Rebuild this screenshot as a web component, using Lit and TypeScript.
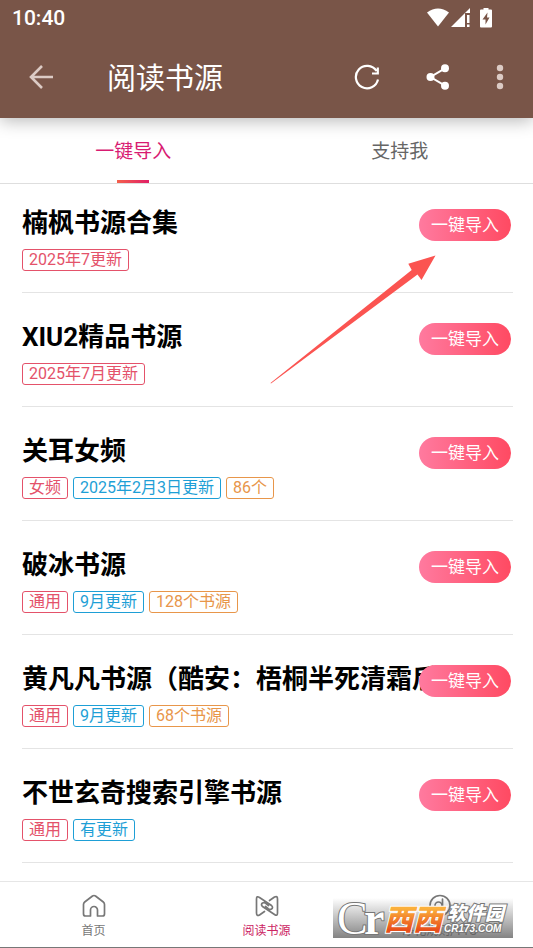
import { LitElement, html, css, svg } from "lit";
import { customElement, state } from "lit/decorators.js";
import { classMap } from "lit/directives/class-map.js";

interface Source {
  title: string;
  tags: string[];
}

const SOURCES: Source[] = [
  { title: "楠枫书源合集", tags: ["2025年7更新"] },
  { title: "XIU2精品书源", tags: ["2025年7月更新"] },
  { title: "关耳女频", tags: ["女频", "2025年2月3日更新", "86个"] },
  { title: "破冰书源", tags: ["通用", "9月更新", "128个书源"] },
  { title: "黄凡凡书源（酷安：梧桐半死清霜后）", tags: ["通用", "9月更新", "68个书源"] },
  { title: "不世玄奇搜索引擎书源", tags: ["通用", "有更新"] },
];

const TAG_COLOURS = ["red", "blue", "orange"];

@customElement("source-item")
class SourceItem extends LitElement {
  static properties = { source: { attribute: false } };
  declare source: Source;

  static styles = css`
    :host {
      display: block;
      border-bottom: 1px solid #e4e4e4;
      padding: 26px 0 21px;
    }
    .head {
      display: grid;
      grid-template-columns: minmax(0, 1fr);
      align-items: center;
      height: 32px;
    }
    .title {
      grid-area: 1 / 1;
      margin: 0;
      font-size: 26px;
      line-height: 32px;
      font-weight: 700;
      color: #000;
      white-space: nowrap;
      overflow: hidden;
    }
    .import {
      grid-area: 1 / 1;
      justify-self: end;
      margin: 4px 2px 0 0;
      height: 32px;
      padding: 0 12px 4px;
      border: 0;
      border-radius: 16px;
      background: linear-gradient(90deg, #ff7a9f, #ff4a62);
      color: #fff;
      font: inherit;
      font-size: 17px;
      cursor: pointer;
    }
    .tags {
      display: flex;
      gap: 5px;
      margin-top: 12px;
    }
    .tag {
      box-sizing: border-box;
      height: 22px;
      padding: 0 6px;
      border: 1px solid;
      border-radius: 3px;
      font-size: 16px;
      line-height: 19px;
      white-space: nowrap;
    }
    .red { color: #e4526a; }
    .blue { color: #1e9fd6; }
    .orange { color: #e8964a; }
  `;

  render() {
    return html`
      <div class="head">
        <h2 class="title">${this.source.title}</h2>
        <button class="import">一键导入</button>
      </div>
      <div class="tags">
        ${this.source.tags.map(
          (t, i) => html`<span class="tag ${TAG_COLOURS[i]}">${t}</span>`
        )}
      </div>
    `;
  }
}

@customElement("app-root")
class AppRoot extends LitElement {
  @state() declare tab: number;

  constructor() {
    super();
    this.tab = 0;
  }

  static styles = css`
    :host {
      display: flex;
      flex-direction: column;
      min-height: 100vh;
      background: #fff;
      font-family: Roboto, "Noto Sans CJK SC", sans-serif;
      color: #666;
    }
    button { font-family: inherit; cursor: pointer; }
    svg { display: block; }
    header {
      position: relative;
      z-index: 1;
      background: #795548;
      color: #fff;
      box-shadow: 0 3px 16px rgba(0, 0, 0, 0.28);
    }
    .status {
      display: flex;
      align-items: center;
      justify-content: space-between;
      height: 36px;
      padding: 0 40px 0 12px;
      font-size: 21px;
      font-weight: 500;
    }
    .bar {
      display: flex;
      align-items: center;
      height: 82px;
      padding: 0 13px 0 21px;
    }
    .bar button {
      display: grid;
      place-items: center;
      width: 40px;
      height: 40px;
      padding: 0;
      border: 0;
      background: none;
      color: inherit;
    }
    .bar .soft { color: #dccbc5; }
    .bar h1 {
      flex: 1;
      margin: 0 0 0 46px;
      padding-top: 4px;
      font-size: 29px;
      line-height: 40px;
      font-weight: 400;
    }
    .actions { display: flex; }
    .actions button:nth-child(2) { margin: 0 22px 0 31px; }
    .tabs {
      display: grid;
      grid-template-columns: 1fr 1fr;
      border-bottom: 1px solid #dedede;
      height: 65px;
    }
    .tab {
      display: flex;
      flex-direction: column;
      align-items: center;
      justify-content: space-between;
      padding: 20px 0 0;
      border: 0;
      background: none;
      font-size: 19px;
      line-height: 28px;
      color: #666;
    }
    .tab.on { color: #d81b72; }
    .tab.on::after {
      content: "";
      width: 32px;
      height: 3px;
      background: linear-gradient(90deg, #f4604c, #e01f66);
    }
    main {
      position: relative;
      flex: 1;
      padding: 0 20px 0 22px;
    }
    source-item:first-of-type { padding-top: 21px; }
    .pointer {
      position: absolute;
      top: 71px;
      right: 97px;
      pointer-events: none;
    }
    footer {
      position: relative;
      border-top: 1px solid #e6e6e6;
      border-bottom: 1px solid #777;
    }
    nav {
      display: grid;
      grid-template-columns: repeat(3, 1fr);
      height: 65px;
      padding: 0 7px;
    }
    nav a {
      display: flex;
      flex-direction: column;
      align-items: center;
      gap: 5px;
      padding-top: 12px;
      font-size: 12px;
      line-height: 16px;
      color: #777;
      text-decoration: none;
    }
    nav svg { color: #777; }
    nav a.on { color: #cc2463; }
    .mark {
      position: absolute;
      right: 20px;
      bottom: 9px;
      overflow: visible;
      pointer-events: none;
      background: linear-gradient(rgba(90, 90, 90, 0), rgba(90, 90, 90, 0.75));
    }
    .serif { font-family: "Liberation Serif", serif; }
    .bold { font-weight: 700; }
    .cjk { font-family: "Noto Sans CJK SC", sans-serif; font-weight: 900; }
    .sans { font-family: "Liberation Sans", sans-serif; font-weight: 700; font-style: italic; }
    .slant { font-style: italic; }
    .edge { stroke: #777; stroke-width: 2; paint-order: stroke; fill: #fff; }
    .warm { stroke: #fff; stroke-width: 2; paint-order: stroke; fill: url(#warm); }
  `;

  private navIcon(i: number) {
    const shapes = [
      svg`<path d="M1.5 10.5 Q1.5 9 2.7 8 L10.5 2 Q12 1 13.5 2 L21.3 8 Q22.5 9 22.5 10.5 V20 Q22.5 22 20.5 22 H15.500 V16 A3.500 3.500 0 0 0 8.500 16 V22 H3.500 Q1.500 22 1.500 20 Z"/>`,
      svg`<path d="M9.500 17.500 L4.500 21 Q1.500 22.500 1.500 19 V5 Q1.500 1.500 4.500 3.500 L16.500 11.500 Q18.500 13.500 16.500 15 Q14.500 16 13 14.500 L10.500 12.500 M14.500 6.500 L19.500 3 Q22.500 1.500 22.500 5 V19 Q22.500 22.500 19.500 20.500 L7.500 12.500 Q5.500 10.500 7.500 9 Q9.500 8 11 9.500 L13.500 11.500"/>`,
      svg`<circle cx="12" cy="11.500" r="10"/><circle cx="10.500" cy="11.500" r="3.500"/><path d="M14.500 5 V15.500"/>`,
    ];
    return html`<svg width="24" height="24" viewBox="0 0 24 24" fill="none" stroke="currentColor" stroke-width="1.700" stroke-linejoin="round" stroke-linecap="round" aria-hidden="true">${shapes[i]}</svg>`;
  }

  render() {
    return html`
      <header>
        <div class="status">
          <span>10:40</span>
          <svg width="66" height="20" viewBox="0 0 66 20" fill="#fff" aria-hidden="true">
            <path d="M0 4.500 Q11 -3.500 22 4.500 L11 18.500 Z" />
            <path d="M24 19 L43 0 V5 H38 V19 Z M40 7 H42.500 V15 H40 Z M40 16.500 H42.500 V19 H40 Z" />
            <path fill-rule="evenodd" d="M56.500 0 H61.500 V1.500 H64 Q65 1.500 65 2.500 V18.500 Q65 19.500 64 19.500 H54 Q53 19.500 53 18.500 V2.500 Q53 1.500 54 1.500 H56.500 Z M60.500 4.500 L55.500 11.500 H58.500 V16.500 L62.500 9.500 H60 Z" />
          </svg>
        </div>
        <div class="bar">
          <button class="soft" aria-label="返回">
            <svg width="24" height="24" viewBox="0 0 24 24" fill="none" stroke="currentColor" stroke-width="2.600">
              <path d="M24 12 H2 M13 1 L2 12 L13 23" />
            </svg>
          </button>
          <h1>阅读书源</h1>
          <div class="actions">
            <button aria-label="刷新">
              <svg width="26" height="26" viewBox="0 0 26 26" fill="none" stroke="currentColor" stroke-width="2.200">
                <path d="M22.500 7 A11.200 11.200 0 1 0 24 15.500 M23.800 3.500 V9.500 H18" />
              </svg>
            </button>
            <button aria-label="分享">
              <svg width="24" height="26" viewBox="0 0 24 26" fill="currentColor">
                <path d="M19 4.300 L4.500 13 L19 21.700" fill="none" stroke="currentColor" stroke-width="2" />
                <circle cx="19" cy="4.300" r="4" /><circle cx="4.500" cy="13" r="4" /><circle cx="19" cy="21.700" r="4" />
              </svg>
            </button>
            <button class="soft" aria-label="更多">
              <svg width="8" height="26" viewBox="0 0 8 26" fill="currentColor">
                <circle cx="4" cy="4" r="3.200" /><circle cx="4" cy="13" r="3.200" /><circle cx="4" cy="22" r="3.200" />
              </svg>
            </button>
          </div>
        </div>
      </header>
      <div class="tabs" role="tablist">
        ${["一键导入", "支持我"].map(
          (t, i) => html`<button
            role="tab"
            aria-selected=${this.tab === i}
            class=${classMap({ tab: true, on: this.tab === i })}
            @click=${() => (this.tab = i)}
          >${t}</button>`
        )}
      </div>
      <main>
        ${SOURCES.map((s) => html`<source-item .source=${s}></source-item>`)}
        <svg class="pointer" width="166" height="129" viewBox="0 0 166 129" aria-hidden="true">
          <path fill="#fb5451" d="M0.500 128 L141.700 15 L138.300 8.700 L165.500 0.500 L151.500 25 L147.500 19.500 L1 128.500 Z" />
        </svg>
      </main>
      <footer>
        <nav>
          ${["首页", "阅读书源", "净化规则/TTS"].map(
            (t, i) => html`<a href="#" class=${classMap({ on: i === 1 })}>${this.navIcon(i)}<span>${t}</span></a>`
          )}
        </nav>
        <svg class="mark" width="180" height="40" viewBox="0 0 180 40">
          <defs>
            <linearGradient id="warm" x1="0" y1="0" x2="0" y2="1">
              <stop offset="0.300" stop-color="#fbb03b" />
              <stop offset="0.800" stop-color="#e8501c" />
            </linearGradient>
          </defs>
          <text class="serif edge" x="4" y="36" font-size="46">C</text>
          <text class="serif bold edge" x="31" y="36" font-size="46">r</text>
          <text class="cjk slant warm" x="51" y="32" font-size="29">西西</text>
          <text class="cjk slant edge" x="114" y="22" font-size="19">软件园</text>
          <text class="sans edge" x="111" y="34" font-size="10">CR173.COM</text>
        </svg>
      </footer>
    `;
  }
}
